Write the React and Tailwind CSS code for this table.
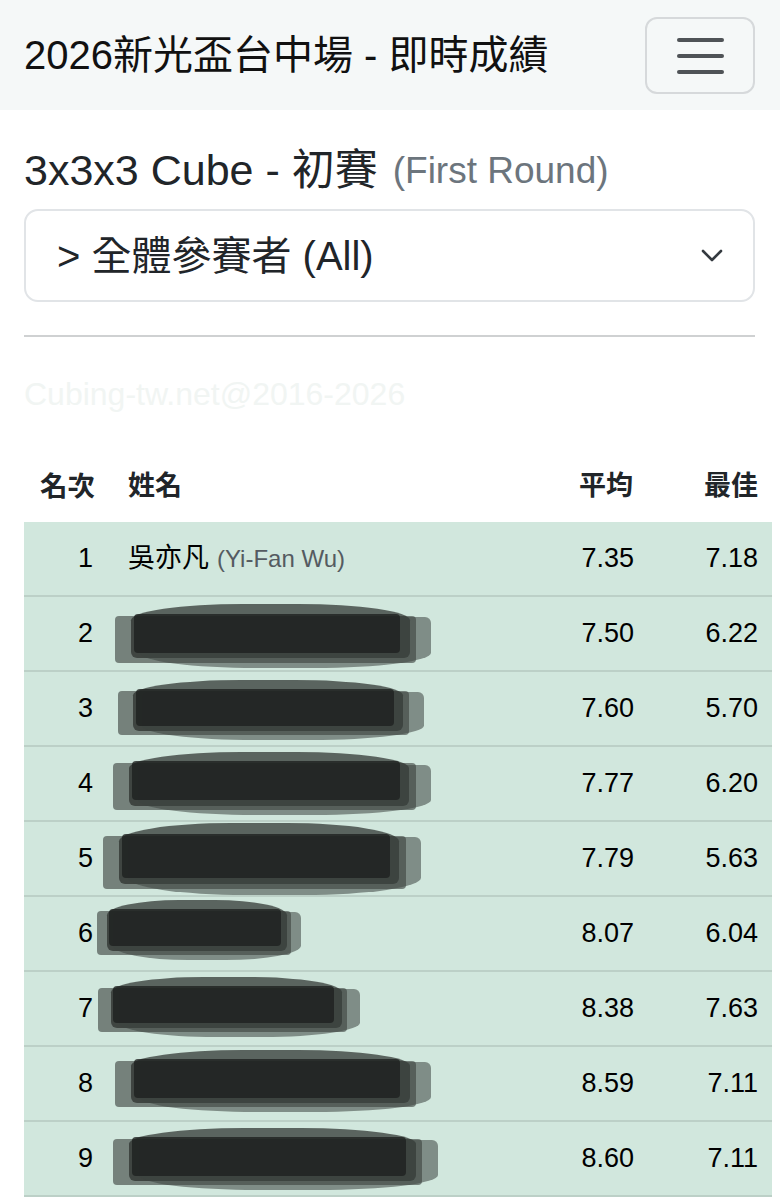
import React from 'react';

const FONT = { fontFamily: '"Liberation Sans", "Noto Sans CJK TC", Arial, sans-serif' };

// rank rows, blob = redaction scribble over the name (row-relative coords)
const rows = [
  { rank: 1, zh: '吳亦凡', en: '(Yi-Fan Wu)', avg: '7.35', best: '7.18' },
  { rank: 2, avg: '7.50', best: '6.22', blob: { x: 91, w: 310, t: 7, h: 64 } },
  { rank: 3, avg: '7.60', best: '5.70', blob: { x: 94, w: 300, t: 8, h: 60 } },
  { rank: 4, avg: '7.77', best: '6.20', blob: { x: 89, w: 312, t: 5, h: 63 } },
  { rank: 5, avg: '7.79', best: '5.63', blob: { x: 79, w: 312, t: 1, h: 72 } },
  { rank: 6, avg: '8.07', best: '6.04', blob: { x: 73, w: 200, t: 3, h: 60 } },
  { rank: 7, avg: '8.38', best: '7.63', blob: { x: 74, w: 257, t: 5, h: 60 } },
  { rank: 8, avg: '8.59', best: '7.11', blob: { x: 91, w: 310, t: 3, h: 62 } },
  { rank: 9, avg: '8.60', best: '7.11', blob: { x: 89, w: 319, t: 6, h: 62 } },
];

const Scribble = ({ x, w, t, h }) => (
  <div className="absolute pointer-events-none" style={{ left: x, top: t, width: w, height: h }}>
    <div className="absolute rounded-sm bg-[rgba(55,62,58,0.6)]" style={{ left: 0, top: h * 0.18, width: w * 0.97, height: h * 0.74 }} />
    <div className="absolute rounded-[40%_40%_6px_6px/30%_30%_6px_6px] bg-[rgba(40,44,42,0.7)]" style={{ left: w * 0.05, top: 0, width: w * 0.9, height: h * 0.85 }} />
    <div className="absolute rounded-[6px_6px_40%_40%/6px_6px_30%_30%] bg-[rgba(60,68,64,0.55)]" style={{ left: w * 0.08, top: h * 0.2, width: w * 0.94, height: h * 0.8 }} />
    <div className="absolute rounded-sm bg-[rgba(30,32,31,0.8)]" style={{ left: w * 0.06, top: h * 0.15, width: w * 0.86, height: h * 0.62 }} />
  </div>
);

export default function App() {
  return (
    <div className="min-h-[1197px] bg-white text-black" style={FONT}>
      {/* Navbar */}
      <nav className="h-[110px] bg-[#f5f8f8] flex items-center justify-between pl-[24px] pr-[25px]">
        <div className="text-[40px] leading-none text-[#111]">2026新光盃台中場 - 即時成績</div>
        <button className="w-[110px] h-[77px] mt-[1px] rounded-[12px] border-2 border-[#d6d9db] flex flex-col items-center justify-center gap-[12px]">
          <span className="block w-[47px] h-[4px] rounded-full bg-[#4f5357]" />
          <span className="block w-[47px] h-[4px] rounded-full bg-[#4f5357]" />
          <span className="block w-[47px] h-[4px] rounded-full bg-[#4f5357]" />
        </button>
      </nav>

      <div className="pl-[24px] pr-[25px]">
        <h2 className="mt-[35px] h-[50px] flex items-center text-[43px] leading-none text-[#212529]">
          3x3x3 Cube - 初賽
          <span className="ml-[15px] text-[37px] text-[#6c757d]">(First Round)</span>
        </h2>

        <div className="mt-[14px] h-[93px] rounded-[14px] border-2 border-[#e1e4e7] flex items-center justify-between pl-[31px] pr-[30px]">
          <span className="text-[40px] leading-none text-[#212529]">&gt; 全體參賽者 (All)</span>
          <svg width="22" height="14" viewBox="0 0 22 14" fill="none">
            <path d="M2 2l9 9 9-9" stroke="#343a40" strokeWidth="2.6" strokeLinecap="round" strokeLinejoin="round" />
          </svg>
        </div>

        <hr className="mt-[33px] border-0 h-[2px] bg-[#cfd1d2]" />

        <div className="mt-[38px] text-[32px] leading-[38px] text-[#f1f5f3]">Cubing-tw.net@2016-2026</div>

        {/* Results table */}
        <div className="mt-[38px] w-[748px] text-[27px]">
          <div className="h-[71px] flex items-center font-bold text-[#212529]">
            <div className="w-[88px] pl-[16px] text-[27.5px]">名次</div>
            <div className="flex-1 pl-[16px]">姓名</div>
            <div className="w-[100px] pr-[29px] text-right">平均</div>
            <div className="w-[110px] pr-[14px] text-right">最佳</div>
          </div>
          {rows.map((r) => (
            <div key={r.rank} className="relative h-[75px] flex items-center bg-[#d1e7dd] border-b-2 border-[#bcd0c7]">
              <div className="w-[88px] pr-[19px] text-right">{r.rank}</div>
              <div className="flex-1 pl-[16px] whitespace-nowrap">
                {r.zh && (
                  <>
                    {r.zh}
                    <span className="ml-[8px] text-[24px] text-[#555b61]">{r.en}</span>
                  </>
                )}
              </div>
              <div className="w-[100px] pr-[28px] text-right">{r.avg}</div>
              <div className="w-[110px] pr-[14px] text-right">{r.best}</div>
              {r.blob && <Scribble {...r.blob} />}
            </div>
          ))}
        </div>
      </div>
    </div>
  );
}
